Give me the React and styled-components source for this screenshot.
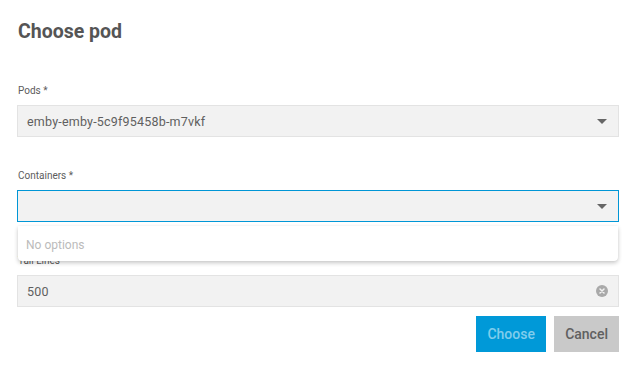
import React from "react";
import styled, { createGlobalStyle } from "styled-components";

const GlobalStyle = createGlobalStyle`
  html, body {
    margin: 0;
    padding: 0;
    background: #fff;
    font-family: Roboto, "Liberation Sans", Arial, sans-serif;
  }
`;

const Dialog = styled.div`
  width: 640px;
  height: 374px;
  box-sizing: border-box;
  padding: 20px 21px 0 17px;
  display: flex;
  flex-direction: column;
`;

const Title = styled.h2`
  margin: 0 0 40px 1px;
  font-size: 19.5px;
  line-height: 24px;
  font-weight: 700;
  color: #555;
`;

const Fields = styled.div`
  display: flex;
  flex-direction: column;
  gap: 32px;
`;

const Field = styled.div`
  position: relative;
  display: flex;
  flex-direction: column;
`;

const Label = styled.label`
  font-size: 10px;
  line-height: 14px;
  color: #5c5c5c;
  margin: 0 0 7px 1px;
`;

const Box = styled.div`
  height: 32px;
  box-sizing: border-box;
  background: #f2f2f2;
  border: 1px solid ${(p) => (p.$focused ? "#0096d6" : "#e3e3e3")};
  display: flex;
  align-items: center;
  padding: 0 10px 0 9px;
  font-size: 12.5px;
  letter-spacing: 0.2px;
  color: #5f5f5f;
`;

const Value = styled.span`
  flex: 1;
`;

const Caret = styled.span`
  width: 0;
  height: 0;
  border-left: 5px solid transparent;
  border-right: 5px solid transparent;
  border-top: 5px solid #666;
  margin-right: 1px;
`;

const Menu = styled.div`
  position: absolute;
  top: 57px;
  left: 1px;
  right: 1px;
  height: 35px;
  box-sizing: border-box;
  padding: 3px 0 0 8px;
  background: #fff;
  border-radius: 0 0 4px 4px;
  box-shadow: 0 2px 4px rgba(0, 0, 0, 0.22), 0 0 1px rgba(0, 0, 0, 0.08);
  display: flex;
  align-items: center;
  font-size: 12px;
  color: #bbb;
  z-index: 2;
`;

const Actions = styled.div`
  display: flex;
  justify-content: flex-end;
  gap: 8px;
  margin-top: 9px;
`;

const Button = styled.button`
  height: 36px;
  border: none;
  padding: 0 11px;
  font-family: Roboto, "Liberation Sans", Arial, sans-serif;
  font-size: 14px;
  font-weight: 500;
  background: ${(p) => (p.$primary ? "#0099d8" : "#c9c9c9")};
  color: ${(p) => (p.$primary ? "#80cdec" : "#606060")};
  min-width: ${(p) => (p.$primary ? "70px" : "64px")};
`;

const ClearIcon = () => (
  <svg width="12" height="12" viewBox="0 0 12 12">
    <circle cx="6" cy="6" r="6" fill="#a9a9a9" />
    <path d="M4 4l4 4M8 4l-4 4" stroke="#f2f2f2" strokeWidth="1.5" strokeLinecap="round" />
  </svg>
);

export default function App() {
  return (
    <>
      <GlobalStyle />
      <Dialog>
        <Title>Choose pod</Title>
        <Fields>
          <Field>
            <Label>Pods *</Label>
            <Box>
              <Value>emby-emby-5c9f95458b-m7vkf</Value>
              <Caret />
            </Box>
          </Field>
          <Field>
            <Label>Containers *</Label>
            <Box $focused>
              <Value />
              <Caret />
            </Box>
            <Menu>No options</Menu>
          </Field>
          <Field>
            <Label>Tail Lines</Label>
            <Box>
              <Value>500</Value>
              <ClearIcon />
            </Box>
          </Field>
        </Fields>
        <Actions>
          <Button $primary disabled>Choose</Button>
          <Button>Cancel</Button>
        </Actions>
      </Dialog>
    </>
  );
}
